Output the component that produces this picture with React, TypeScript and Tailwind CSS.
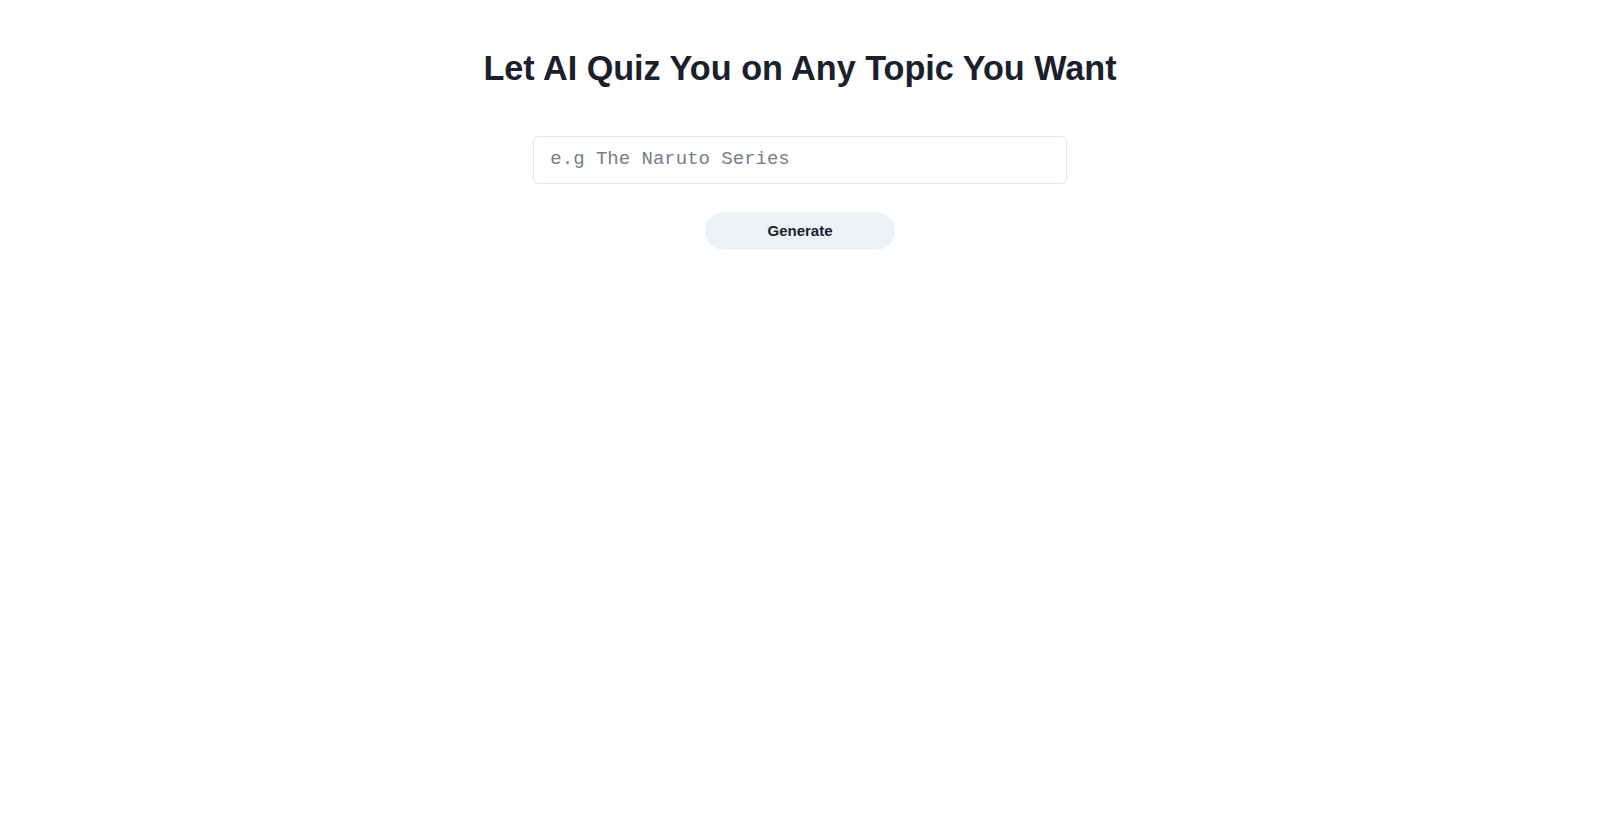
export default function App() {
  return (
    <div className="min-h-screen bg-white flex flex-col items-center pt-[44px]">
      <h1 className="font-['Liberation_Sans',Arial,sans-serif] font-bold text-[34.2px] leading-[48px] text-[#1a202c]">
        Let AI Quiz You on Any Topic You Want
      </h1>
      <input
        type="text"
        placeholder="e.g The Naruto Series"
        className="mt-[44px] w-1/3 h-12 pl-4 pr-4 pb-[3px] border border-[#e2e8f0] rounded-md font-['Liberation_Mono',monospace] text-[19px] text-[#1a202c] placeholder:text-[#757d8a] outline-none"
      />
      <button className="mt-[28px] w-[190px] h-[38px] rounded-full bg-[#edf2f7] text-[#1a202c] font-['Liberation_Sans',Arial,sans-serif] font-bold text-[15px] pt-[1px]">
        Generate
      </button>
    </div>
  );
}
